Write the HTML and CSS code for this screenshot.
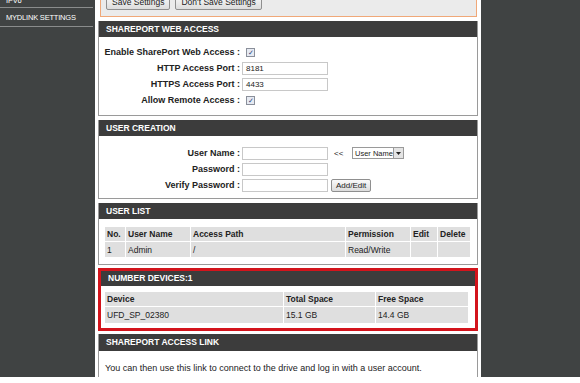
FILE: index.html
```html
<!DOCTYPE html>
<html>
<head>
<meta charset="utf-8">
<link rel="stylesheet" href="styles.css">
</head>
<body>
<div class="page">
  <nav class="sidebar">
    <div class="nav-item cut">IPV6</div>
    <div class="nav-item">MYDLINK SETTINGS</div>
  </nav>
  <main class="content">
    <div class="actions">
      <div class="btnrow">
        <button class="btn">Save Settings</button>
        <button class="btn">Don't Save Settings</button>
      </div>
    </div>

    <section class="box">
      <h2 class="box-head">SHAREPORT WEB ACCESS</h2>
      <div class="box-body form form-a">
        <div class="row"><label>Enable SharePort Web Access :</label><span class="check">&#10003;</span></div>
        <div class="row"><label>HTTP Access Port :</label><span class="input">8181</span></div>
        <div class="row"><label>HTTPS Access Port :</label><span class="input">4433</span></div>
        <div class="row"><label>Allow Remote Access :</label><span class="check">&#10003;</span></div>
      </div>
    </section>

    <section class="box">
      <h2 class="box-head">USER CREATION</h2>
      <div class="box-body form form-b">
        <div class="row"><label>User Name :</label><span class="input"></span><span class="arrows">&lt;&lt;</span><span class="select">User Name<span class="drop"><svg width="7" height="5" viewBox="0 0 7 5"><path d="M1 1h5L3.5 4z" fill="#222"/></svg></span></span></div>
        <div class="row"><label>Password :</label><span class="input"></span></div>
        <div class="row"><label>Verify Password :</label><span class="input"></span><button class="btn btn-add">Add/Edit</button></div>
      </div>
    </section>

    <section class="box">
      <h2 class="box-head">USER LIST</h2>
      <div class="box-body tbl-wrap">
        <table class="tbl users">
          <tr><th class="c-no">No.</th><th class="c-un">User Name</th><th class="c-ap">Access Path</th><th class="c-pe">Permission</th><th class="c-ed">Edit</th><th>Delete</th></tr>
          <tr><td>1</td><td>Admin</td><td>/</td><td>Read/Write</td><td></td><td></td></tr>
        </table>
      </div>
    </section>

    <section class="box red">
      <h2 class="box-head">NUMBER DEVICES:1</h2>
      <div class="box-body tbl-wrap dev-wrap">
        <table class="tbl devices">
          <tr><th class="c-dev">Device</th><th class="c-ts">Total Space</th><th>Free Space</th></tr>
          <tr><td>UFD_SP_02380</td><td>15.1 GB</td><td>14.4 GB</td></tr>
        </table>
      </div>
    </section>

    <section class="box last">
      <h2 class="box-head">SHAREPORT ACCESS LINK</h2>
      <div class="box-body note">You can then use this link to connect to the drive and log in with a user account.</div>
    </section>
  </main>
  <aside class="rightbar"></aside>
</div>
</body>
</html>
```

FILE: styles.css
```css
* { box-sizing: border-box; }
html, body { margin: 0; padding: 0; background: #fff; }
body { font-family: "Liberation Sans", Arial, sans-serif; font-size: 9px; color: #222; }

.page {
  display: grid;
  grid-template-columns: 95px 386px 99px;
  height: 377px;
  overflow: hidden;
}

.sidebar { background: #404343; color: #fff; }
.nav-item {
  height: 19px;
  line-height: 19px;
  padding-left: 6px;
  font-size: 7.5px;
  letter-spacing: -0.2px;
  border-bottom: 1px solid #8a8c8c;
  margin-right: 2px;
}
.nav-item.cut { height: 8px; line-height: 1px; }

.rightbar { background: #404343; }

.content { padding: 0 3px 0 3px; }

.actions {
  height: 17px;
  background: #ebebeb;
  border: 1px solid #f0a878;
  border-top: none;
  margin: 0 1px 0 2px;
  overflow: hidden;
}
.btnrow { display: flex; gap: 5px; padding-left: 5px; margin-top: -5px; }
.btn {
  font-family: "Liberation Sans", Arial, sans-serif;
  font-size: 8.5px;
  color: #222;
  background: linear-gradient(#fafafa, #dcdcdc);
  border: 1px solid #8f8f8f;
  border-radius: 2px;
  padding: 0 5px;
  height: 15px;
  line-height: 13px;
}

.box { margin-top: 4px; border: 1px solid #9a9a9a; border-top: none; }
.box-head {
  margin: 0;
  height: 16px;
  line-height: 16px;
  background: #3c3c3c;
  color: #fff;
  font-size: 8.5px;
  font-weight: bold;
  padding-left: 7px;
}
.box-body { background: #fff; }

.form { padding: 7px 0 4px 0; display: flex; flex-direction: column; }
.row { display: flex; align-items: center; height: 16px; }
.row label {
  width: 143px;
  text-align: right;
  font-weight: bold;
  font-size: 9px;
  padding-right: 2px;
  white-space: nowrap;
}
.check {
  width: 9px; height: 9px;
  border: 1px solid #8a8f9a;
  background: #e6eaf2;
  color: #2a3f7a;
  font-size: 7px;
  line-height: 8px;
  text-align: center;
  margin-left: 4px;
}
.input {
  width: 86px; height: 13px;
  border: 1px solid #c8c8c8;
  background: #fff;
  font-size: 8px;
  line-height: 11px;
  padding-left: 3px;
}
.form-a { height: 78px; padding-top: 7px; }
.form-b { height: 62px; padding-top: 9px; }
.arrows { font-size: 8px; margin-left: 6px; width: 18px; }
.select {
  display: flex; align-items: center;
  height: 12px; width: 52px;
  border: 1px solid #9a9a9a;
  font-size: 7.5px;
  padding-left: 2px;
  justify-content: space-between;
}
.drop {
  width: 10px; height: 10px;
  border-left: 1px solid #9a9a9a;
  background: #e4e4e4;
  display: flex; align-items: center; justify-content: center;
}
.btn-add { margin-left: 3px; height: 13px; line-height: 11px; padding: 0 4px; font-size: 8px; }

.tbl-wrap { padding: 7px 6px 6px 5px; }
.tbl { width: 100%; border-collapse: separate; border-spacing: 1px 1px; }
.tbl th, .tbl td {
  background: #dfdfdf;
  text-align: left;
  padding: 0 2px;
  height: 14px;
  font-size: 8.5px;
  white-space: nowrap;
}
.tbl td { height: 15px; font-weight: normal; }
.tbl th { font-weight: bold; }
.users { height: 31px; }
.c-no { width: 20px; }
.c-un { width: 64px; }
.c-ap { width: 154px; }
.c-pe { width: 64px; }
.c-ed { width: 26px; }

.red { border: 3px solid #d3141c; margin-top: 3px; }
.red .box-head { height: 15px; line-height: 15px; }
.dev-wrap { padding: 5px 6px 4px 3px; }
.devices th { height: 14px; }
.devices td { height: 16px; }
.c-dev { width: 178px; }
.c-ts { width: 91px; }

.last { margin-top: 3px; }
.last .box-head { height: 17px; line-height: 17px; }
.note { height: 30px; padding: 12px 0 0 6px; font-size: 9px; }
```
